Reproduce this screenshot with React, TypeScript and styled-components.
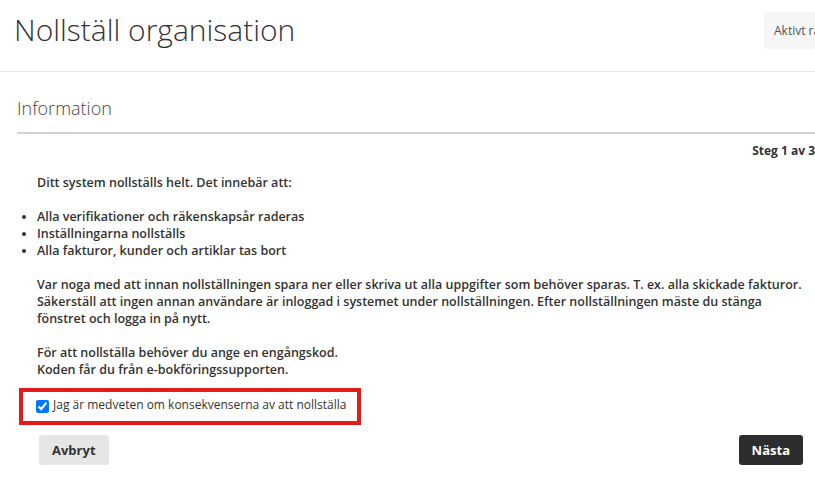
import styled, { createGlobalStyle } from 'styled-components';
import { FC, useState } from 'react';

const GlobalStyle = createGlobalStyle`
	html, body {
		margin: 0;
		padding: 0;
		background: #fff;
		overflow: hidden;
	}
	body {
		font-family: 'Open Sans', 'Liberation Sans', sans-serif;
		color: #333;
	}
`;

const consequences: string[] = [
	'Alla verifikationer och räkenskapsår raderas',
	'Inställningarna nollställs',
	'Alla fakturor, kunder och artiklar tas bort',
];

export const App: FC = () => {
	const [confirmed, setConfirmed] = useState(true);

	return (
		<>
			<GlobalStyle />
			<Page>
				<Header>
					<Title>Nollställ organisation</Title>
					<YearBadge>Aktivt räkenskapsår</YearBadge>
				</Header>

				<Content>
					<SectionTitle>Information</SectionTitle>
					<StepLabel>Steg 1 av 3</StepLabel>

					<Body>
						<Paragraph>Ditt system nollställs helt. Det innebär att:</Paragraph>
						<List>
							{consequences.map((item, i) => {
								return <ListItem key={i}>{item}</ListItem>;
							})}
						</List>
						<Paragraph>
							Var noga med att innan nollställningen spara ner eller skriva ut
							alla uppgifter som behöver sparas. T. ex. alla skickade fakturor.
							<br />
							Säkerställ att ingen annan användare är inloggad i systemet under
							nollställningen. Efter nollställningen mäste du stänga
							<br />
							fönstret och logga in på nytt.
						</Paragraph>
						<Paragraph>
							För att nollställa behöver du ange en engångskod.
							<br />
							Koden får du från e-bokföringssupporten.
						</Paragraph>
					</Body>

					<ConfirmBox>
						<Checkbox
							type="checkbox"
							checked={confirmed}
							onChange={(e) => setConfirmed(e.target.checked)}
						/>
						<ConfirmText>Jag är medveten om konsekvenserna av att nollställa</ConfirmText>
					</ConfirmBox>

					<Actions>
						<Button variant="light">Avbryt</Button>
						<Button variant="dark">Nästa</Button>
					</Actions>
				</Content>
			</Page>
		</>
	);
};

export default App;

const Page = styled.div`
	width: 815px;
	height: 482px;
	overflow: hidden;
`;

const Header = styled.header`
	display: grid;
	grid-template-columns: 750px max-content;
	align-items: start;
	box-sizing: border-box;
	height: 72px;
	padding: 12px 0 0 14px;
	border-bottom: 1px solid #e5e5e5;
	overflow: hidden;
`;

const Title = styled.h1`
	margin: 0;
	font-size: 30px;
	line-height: 36px;
	font-weight: 300;
	color: #333;
	white-space: nowrap;
`;

const YearBadge = styled.div`
	height: 37px;
	line-height: 37px;
	padding: 0 10px;
	background: #f6f6f6;
	border-radius: 4px;
	font-size: 12px;
	color: #555;
	white-space: nowrap;
`;

const Content = styled.main`
	padding-left: 17px;
`;

const SectionTitle = styled.h2`
	margin: 24px 0 0;
	padding-bottom: 12px;
	border-bottom: 2px solid #d2d2d2;
	font-size: 18px;
	line-height: 24px;
	font-weight: 300;
	color: #444;
`;

const StepLabel = styled.div`
	margin-top: 8px;
	text-align: right;
	font-size: 12px;
	line-height: 17px;
	font-weight: 700;
	color: #333;
	white-space: nowrap;
`;

const Body = styled.div`
	margin-top: 15px;
	padding-left: 20px;
	font-size: 12.5px;
	line-height: 17px;
	font-weight: 600;
	color: #333;
`;

const Paragraph = styled.p`
	margin: 0 0 17px;
	white-space: nowrap;

	&:last-child {
		margin-bottom: 0;
	}
`;

const List = styled.ul`
	margin: 0 0 17px -20px;
	padding-left: 20px;
	list-style: disc;
`;

const ListItem = styled.li`
	white-space: nowrap;
`;

const ConfirmBox = styled.label`
	display: inline-flex;
	align-items: center;
	margin: 10px 0 0 2px;
	padding: 4px 11px 8px 13px;
	border: 4px solid #e31b1b;
	cursor: pointer;
`;

const Checkbox = styled.input`
	width: 13px;
	height: 13px;
	margin: 3px 4px 0 0;
	accent-color: #0075ff;
`;

const ConfirmText = styled.span`
	font-size: 12px;
	line-height: 17px;
	color: #333;
	white-space: nowrap;
`;

const Actions = styled.div`
	display: flex;
	justify-content: space-between;
	margin-top: 10px;
	padding: 0 12px 0 22px;
`;

const Button = styled.button<{ variant: 'light' | 'dark' }>`
	height: 30px;
	padding: 0 13px;
	border: none;
	border-radius: 3px;
	font-family: 'Open Sans', 'Liberation Sans', sans-serif;
	font-size: 13px;
	font-weight: 700;
	background: ${(props) => (props.variant === 'dark' ? '#2d2d2d' : '#e6e6e6')};
	color: ${(props) => (props.variant === 'dark' ? '#fff' : '#333')};
	cursor: pointer;
`;
